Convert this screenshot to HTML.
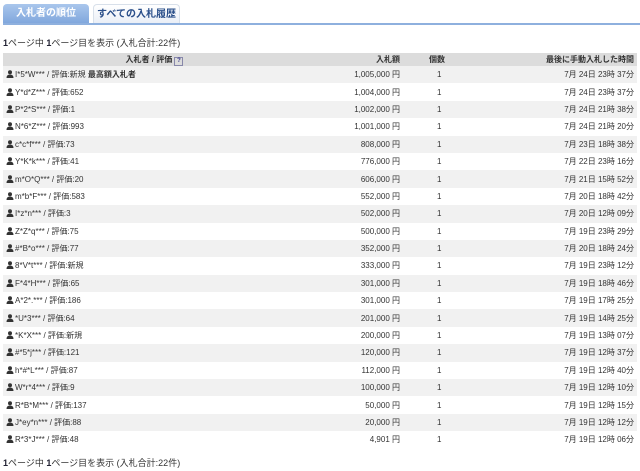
<!DOCTYPE html><html><head><meta charset="utf-8"><style>
body{margin:0;background:#fff;font-family:"Liberation Sans","Noto Sans CJK JP",sans-serif;font-size:8px;color:#333;width:640px;height:471px;overflow:hidden;position:relative}
.tab{position:absolute;top:4px;height:20px;border-radius:4px 4px 0 0;font-size:10px;font-weight:bold;text-align:center;line-height:20px}
.t1{left:3px;width:86px;background:linear-gradient(#a9c6ec,#7fa6dc);color:#fff}
.t2{left:93px;width:85px;background:linear-gradient(#fff,#e9eef6);color:#2a4f8a;border:1px solid #d8e0ea;border-bottom:none;height:19px}
.line{position:absolute;top:23px;left:3px;right:0;height:2px;background:#8eb0de}
.info{position:absolute;left:3px;font-size:9px;color:#333}
.info b{color:#223;font-weight:bold}
table{position:absolute;top:53px;left:3px;width:634px;border-collapse:collapse;table-layout:fixed}
td,th{padding:0 3px;height:17.4px;white-space:nowrap}
th{background:#dcdcdc;height:13px;font-weight:bold;font-size:8px;color:#333}
#b tr:nth-child(odd) td{background:#f1f1f1}
.r{text-align:right}
.u{display:inline-block;width:8px;height:8px;vertical-align:-1px;margin-right:1px}
.q{display:inline-block;width:7px;height:7px;border:1px solid #88a;font-size:6px;line-height:7px;text-align:center;color:#338;vertical-align:0}
</style></head><body>
<div class="tab t1">入札者の順位</div><div class="tab t2">すべての入札履歴</div><div class="line"></div>
<div class="info" style="top:36px"><b>1</b>ページ中 <b>1</b>ページ目を表示 (入札合計:22件)</div>
<table>
<colgroup><col style="width:330px"><col style="width:70px"><col style="width:70px"><col></colgroup>
<thead><tr><th style="text-align:center;padding-right:30px">入札者 / 評価 <span class="q">?</span></th><th class="r">入札額</th><th style="text-align:left;padding-left:26px">個数</th><th class="r">最後に手動入札した時間</th></tr></thead>
<tbody id="b"></tbody>
</table>
<div class="info" style="top:456px"><b>1</b>ページ中 <b>1</b>ページ目を表示 (入札合計:22件)</div>
<script>
var d=[["I*5*W***","新規 <b>最高額入札者</b>","1,005,000","24","23","37"],["Y*d*Z***","652","1,004,000","24","23","37"],["P*2*S***","1","1,002,000","24","21","38"],["N*6*Z***","993","1,001,000","24","21","20"],["c*c*f***","73","808,000","23","18","38"],["Y*K*k***","41","776,000","22","23","16"],["m*O*Q***","20","606,000","21","15","52"],["m*b*F***","583","552,000","20","18","42"],["I*z*n***","3","502,000","20","12","09"],["Z*Z*q***","75","500,000","19","23","29"],["#*B*o***","77","352,000","20","18","24"],["8*V*t***","新規","333,000","19","23","12"],["F*4*H***","65","301,000","19","18","46"],["A*2*.***","186","301,000","19","17","25"],["*U*3***","64","201,000","19","14","25"],["*K*X***","新規","200,000","19","13","07"],["#*5*j***","121","120,000","19","12","37"],["h*#*L***","87","112,000","19","12","40"],["W*r*4***","9","100,000","19","12","10"],["R*B*M***","137","50,000","19","12","15"],["J*ey*n***","88","20,000","19","12","12"],["R*3*J***","48","4,901","19","12","06"]];
var ic='<svg class="u" viewBox="0 0 8 8"><circle cx="4" cy="2.3" r="2" fill="#333"/><path d="M0.5 8 Q0.5 4.5 4 4.5 Q7.5 4.5 7.5 8Z" fill="#333"/></svg>';
var h="";d.forEach(function(r){h+='<tr><td>'+ic+r[0]+' / 評価:'+r[1]+'</td><td class="r">'+r[2]+' 円</td><td style="text-align:left;padding-left:34px">1</td><td class="r">7月 '+r[3]+'日 '+r[4]+'時 '+r[5]+'分</td></tr>'});
document.getElementById("b").innerHTML=h;
</script>
</body></html>
